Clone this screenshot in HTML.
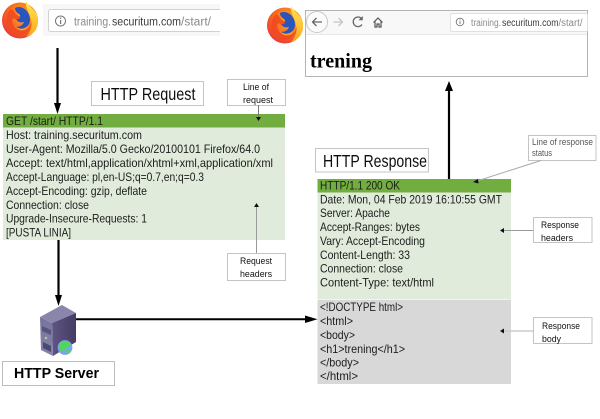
<!DOCTYPE html>
<html>
<head>
<meta charset="utf-8">
<style>
html,body{margin:0;padding:0;background:#fff;width:600px;height:419px;overflow:hidden}
svg{display:block}
text{font-family:"Liberation Sans",sans-serif;fill:#1c1c1c;font-size:11.6px}
.s{font-size:9.6px;fill:#111}
.a{font-size:11.5px;fill:#8a8a8a}
.b{font-size:10px;fill:#8a8a8a}
.d{fill:#3a3a3a}
.box{fill:#fff;stroke:#c4c4c4;stroke-width:1}
</style>
</head>
<body>
<svg width="600" height="419" viewBox="0 0 600 419" xmlns="http://www.w3.org/2000/svg">
<defs>
<radialGradient id="ff" cx="0.6" cy="0.35" r="0.75">
<stop offset="0" stop-color="#ffb02a"/><stop offset="0.6" stop-color="#f8651c"/><stop offset="1" stop-color="#e52c45"/>
</radialGradient>
<linearGradient id="tail" x1="0" y1="0" x2="0" y2="1">
<stop offset="0" stop-color="#ffe84d"/><stop offset="1" stop-color="#ffa51f"/>
</linearGradient>
<linearGradient id="srv" x1="0" y1="0" x2="1" y2="0">
<stop offset="0" stop-color="#5f5585"/><stop offset="1" stop-color="#463c63"/>
</linearGradient>
<linearGradient id="srvf" x1="0" y1="0" x2="0" y2="1">
<stop offset="0" stop-color="#77729f"/><stop offset="1" stop-color="#8583a8"/>
</linearGradient>
<g id="fox">
<circle cx="20" cy="20.500" r="18" fill="url(#ff)"/>
<path d="M26 1C28 6 34 8 37 15C39 21 38 27 35 31C32 34 29 36 26 37C31 32 32 26 31 20C30 13 25 8 26 1Z" fill="url(#tail)"/>
<path d="M15 8C18 6 23 7 26 10C30 14 31 20 29 24C26 29 20 30 16 27C20 27 23 25 24 22C21 23 17 22 16 19C19 19 20 17 20 15C18 13 15 12 15 8Z" fill="#2c55bd"/>
<path d="M10 10C13 8 14 12 16 14C18 16 20 16 20 18C18 20 15 20 14 18L12 20C12 25 16 30 22 30.500C27 31 31 27 32 22C32 29 26 35 19 35C12 35 7 30 6 24C6 18 7 13 10 10Z" fill="#f04a22" opacity="0.9"/>
<path d="M14 25C18 30 25 30 29 25C27 31 18 33 14 25Z" fill="#ffa42a"/>
</g>
<filter id="soft" x="-5%" y="-5%" width="110%" height="110%"><feGaussianBlur stdDeviation="0.35"/></filter>
</defs>
<rect width="600" height="419" fill="#fff"/>
<g filter="url(#soft)">

<!-- left firefox and address bar -->
<use href="#fox"/>
<rect x="43" y="4" width="177" height="32" fill="#f7f7f7"/>
<rect x="48.500" y="9.500" width="180" height="22" rx="2" fill="#fff" stroke="#d2d2d2"/>
<rect x="220" y="3" width="12" height="34" fill="#fff"/>
<circle cx="60.500" cy="21" r="5" fill="none" stroke="#777" stroke-width="1"/>
<rect x="60" y="20" width="1.200" height="4" fill="#777"/><rect x="60" y="17.600" width="1.200" height="1.300" fill="#777"/>
<text class="a" x="74" y="25.500" textLength="37" lengthAdjust="spacingAndGlyphs">training.</text>
<text class="a d" x="112" y="25.500" textLength="69" lengthAdjust="spacingAndGlyphs">securitum.com</text>
<text class="a" x="181" y="25.500" textLength="30" lengthAdjust="spacingAndGlyphs">/start/</text>

<!-- right firefox and browser -->
<use href="#fox" x="265" y="5"/>
<rect x="305.500" y="10.500" width="282" height="66" fill="#fff" stroke="#b4b4b4"/>
<rect x="306" y="11" width="281" height="23" fill="#f8f8f8"/>
<line x1="306" y1="34.500" x2="587" y2="34.500" stroke="#e8e8e8"/>
<circle cx="317" cy="22" r="10.500" fill="#fbfbfb" stroke="#c8c8c8"/>
<path d="M322 22H312.500M316.500 18L312.500 22L316.500 26" fill="none" stroke="#666" stroke-width="1.300"/>
<path d="M333.500 22H342.500M338.500 18L342.500 22L338.500 26" fill="none" stroke="#c4c4c4" stroke-width="1.300"/>
<path d="M362 24.500A4.800 4.800 0 1 1 361.500 18.500" fill="none" stroke="#666" stroke-width="1.300"/>
<path d="M362.800 16V20.300H358.500Z" fill="#666"/>
<path d="M373.500 22.500L378 18L382.500 22.500M375 21.500V27H377V24H379V27H381V21.500" fill="none" stroke="#555" stroke-width="1.200"/>
<rect x="450.500" y="13.500" width="137" height="18" rx="1.500" fill="#fff" stroke="#e0e0e0"/>
<circle cx="460" cy="22" r="3.800" fill="none" stroke="#777" stroke-width="0.900"/>
<rect x="459.600" y="21.200" width="0.900" height="3" fill="#777"/><rect x="459.600" y="19.500" width="0.900" height="1" fill="#777"/>
<text class="b" x="471" y="26" textLength="30" lengthAdjust="spacingAndGlyphs">training.</text>
<text class="b d" x="502" y="26" textLength="56.500" lengthAdjust="spacingAndGlyphs">securitum.com</text>
<text class="b" x="558.500" y="26" textLength="24" lengthAdjust="spacingAndGlyphs">/start/</text>
<text x="310" y="67.500" textLength="62" lengthAdjust="spacingAndGlyphs" style="font-family:'Liberation Serif',serif;font-weight:700;font-size:21px;fill:#000">trening</text>

<!-- request block -->
<rect x="3" y="114" width="282" height="13.500" fill="#72ad3f"/>
<rect x="3" y="127.500" width="282" height="112.500" fill="#e1ebdb"/>
<text x="6" y="125" textLength="97" lengthAdjust="spacingAndGlyphs">GET /start/ HTTP/1.1</text>
<text x="6" y="139.200" textLength="136" lengthAdjust="spacingAndGlyphs">Host: training.securitum.com</text>
<text x="6" y="153" textLength="254" lengthAdjust="spacingAndGlyphs">User-Agent: Mozilla/5.0 Gecko/20100101 Firefox/64.0</text>
<text x="6" y="167" textLength="267" lengthAdjust="spacingAndGlyphs">Accept: text/html,application/xhtml+xml,application/xml</text>
<text x="6" y="181" textLength="198" lengthAdjust="spacingAndGlyphs">Accept-Language: pl,en-US;q=0.7,en;q=0.3</text>
<text x="6" y="195" textLength="141" lengthAdjust="spacingAndGlyphs">Accept-Encoding: gzip, deflate</text>
<text x="6" y="208.800" textLength="83" lengthAdjust="spacingAndGlyphs">Connection: close</text>
<text x="6" y="222.600" textLength="141" lengthAdjust="spacingAndGlyphs">Upgrade-Insecure-Requests: 1</text>
<text x="6" y="236.400" textLength="65" lengthAdjust="spacingAndGlyphs">[PUSTA LINIA]</text>

<!-- response block -->
<rect x="317.500" y="179" width="193.500" height="13.500" fill="#72ad3f"/>
<rect x="317.500" y="192.500" width="193.500" height="107" fill="#e1ebdb"/>
<rect x="317.500" y="300" width="193.500" height="84" fill="#d8d8d8"/>
<text x="320" y="189.500" textLength="80" lengthAdjust="spacingAndGlyphs">HTTP/1.1 200 OK</text>
<text x="320" y="203.500" textLength="182" lengthAdjust="spacingAndGlyphs">Date: Mon, 04 Feb 2019 16:10:55 GMT</text>
<text x="320" y="217" textLength="70" lengthAdjust="spacingAndGlyphs">Server: Apache</text>
<text x="320" y="231" textLength="100" lengthAdjust="spacingAndGlyphs">Accept-Ranges: bytes</text>
<text x="320" y="245" textLength="105" lengthAdjust="spacingAndGlyphs">Vary: Accept-Encoding</text>
<text x="320" y="258.800" textLength="90" lengthAdjust="spacingAndGlyphs">Content-Length: 33</text>
<text x="320" y="272.600" textLength="83" lengthAdjust="spacingAndGlyphs">Connection: close</text>
<text x="320" y="286.400" textLength="114" lengthAdjust="spacingAndGlyphs">Content-Type: text/html</text>
<text x="320" y="311" textLength="83" lengthAdjust="spacingAndGlyphs">&lt;!DOCTYPE html&gt;</text>
<text x="320" y="325" textLength="33" lengthAdjust="spacingAndGlyphs">&lt;html&gt;</text>
<text x="320" y="339" textLength="35" lengthAdjust="spacingAndGlyphs">&lt;body&gt;</text>
<text x="320" y="352.800" textLength="85" lengthAdjust="spacingAndGlyphs">&lt;h1&gt;trening&lt;/h1&gt;</text>
<text x="320" y="366.500" textLength="39" lengthAdjust="spacingAndGlyphs">&lt;/body&gt;</text>
<text x="320" y="380" textLength="38" lengthAdjust="spacingAndGlyphs">&lt;/html&gt;</text>

<!-- labels -->
<rect class="box" x="91.500" y="81.500" width="112" height="24"/>
<text x="100.500" y="100" textLength="95" lengthAdjust="spacingAndGlyphs" style="font-size:17.500px;fill:#111">HTTP Request</text>
<rect class="box" x="315.500" y="148.500" width="113" height="23.500"/>
<text x="323" y="167" textLength="104" lengthAdjust="spacingAndGlyphs" style="font-size:17.500px;fill:#111">HTTP Response</text>
<rect x="2.500" y="361.500" width="112" height="24" fill="#fff" stroke="#bdbdbd"/>
<text x="14" y="378" textLength="85" lengthAdjust="spacingAndGlyphs" style="font-size:15px;font-weight:700;fill:#000">HTTP Server</text>

<rect class="box" x="227.500" y="79.500" width="58" height="26"/>
<text class="s" x="243" y="90" textLength="26" lengthAdjust="spacingAndGlyphs">Line of</text>
<text class="s" x="243" y="103" textLength="30" lengthAdjust="spacingAndGlyphs">request</text>
<path d="M258.500 105V118" stroke="#777" fill="none"/>
<path d="M256 117H261L258.500 121Z" fill="#111"/>

<rect class="box" x="227.500" y="253.500" width="58" height="27"/>
<text class="s" x="240" y="264" textLength="32" lengthAdjust="spacingAndGlyphs">Request</text>
<text class="s" x="240" y="277" textLength="32" lengthAdjust="spacingAndGlyphs">headers</text>
<path d="M256.500 253V206" stroke="#999" fill="none"/>
<path d="M254 207H259L256.500 203Z" fill="#111"/>

<rect class="box" x="528.500" y="135.500" width="67.500" height="25"/>
<text class="s" x="532" y="145" textLength="61" lengthAdjust="spacingAndGlyphs" style="fill:#555">Line of response</text>
<text class="s" x="532" y="156" textLength="20" lengthAdjust="spacingAndGlyphs" style="fill:#555">status</text>
<path d="M541 160.500L477 181" stroke="#aaa" fill="none"/>
<path d="M473 182L478 179L478.500 183.500Z" fill="#111"/>

<rect class="box" x="533.500" y="217.500" width="58.500" height="25"/>
<text class="s" x="541" y="228" textLength="38" lengthAdjust="spacingAndGlyphs">Response</text>
<text class="s" x="541" y="241" textLength="32" lengthAdjust="spacingAndGlyphs">headers</text>
<path d="M533 230.500H503" stroke="#999" fill="none"/>
<path d="M500 230.500L504 228V233Z" fill="#111"/>

<rect class="box" x="533.500" y="317.500" width="58.500" height="26"/>
<text class="s" x="542" y="329" textLength="38" lengthAdjust="spacingAndGlyphs">Response</text>
<text class="s" x="542" y="342" textLength="19" lengthAdjust="spacingAndGlyphs">body</text>
<path d="M533 331H503" stroke="#ccc" stroke-width="1.500" fill="none"/>
<path d="M500 331L504 328.500V333.500Z" fill="#111"/>

<!-- arrows -->
<path d="M57.500 48V106" stroke="#000" stroke-width="2.200" fill="none"/>
<path d="M54 103H61L57.500 114Z" fill="#000"/>
<path d="M58.500 240V298" stroke="#000" stroke-width="2.200" fill="none"/>
<path d="M55 295H62L58.500 306Z" fill="#000"/>
<path d="M449 179V90" stroke="#000" stroke-width="2.200" fill="none"/>
<path d="M445 91H453L449 81Z" fill="#000"/>
<path d="M76 319.300H308" stroke="#000" stroke-width="2" fill="none"/>
<path d="M305 315.500L317.500 319.300L305 323Z" fill="#000"/>

<!-- server icon -->
<path d="M40 317L62 305L76 313L52 323Z" fill="#8a85aa"/>
<path d="M52 323L76 313V342L53 356Z" fill="url(#srv)"/>
<path d="M40 317L52 323L53 356L41 350Z" fill="url(#srvf)"/>
<path d="M42 326L51 330V335L42 331Z" fill="#55547c"/>
<path d="M43 342L51 346V352L43 348Z" fill="#4b4870"/>
<circle cx="46" cy="338" r="1.300" fill="#9fd28f"/>
<circle cx="65" cy="347.500" r="7.400" fill="#7f9ff0"/>
<path d="M60 343C63 339.500 68 340.500 71 344C69 346 68 349 65 348C65 351 62 353 60 350C59 348 59 345 60 343Z" fill="#4fd65f"/>
<path d="M67 349C69 349 71 350 70 352C68 354 66 353 66 351Z" fill="#4fd65f"/>
</g>
</svg>
</body>
</html>
